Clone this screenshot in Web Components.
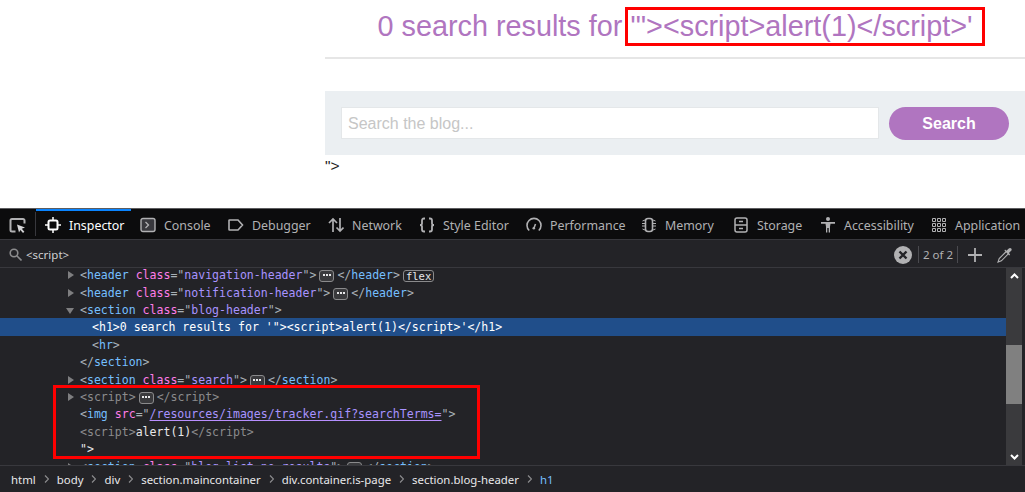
<!DOCTYPE html>
<html>
<head>
<meta charset="utf-8">
<title>search results</title>
<style>
  html, body { margin: 0; padding: 0; height: 492px; overflow: hidden; background: #fff; }
  body { font-family: "Liberation Sans", Arial, sans-serif; }
</style>
</head>
<body>
<blog-page></blog-page>
<dev-tools>
  <dt-tab slot="tabs" icon="inspector" w="95" selected>Inspector</dt-tab>
  <dt-tab slot="tabs" icon="console" w="88">Console</dt-tab>
  <dt-tab slot="tabs" icon="debugger" w="100">Debugger</dt-tab>
  <dt-tab slot="tabs" icon="network" w="91">Network</dt-tab>
  <dt-tab slot="tabs" icon="style" w="107">Style Editor</dt-tab>
  <dt-tab slot="tabs" icon="performance" w="115">Performance</dt-tab>
  <dt-tab slot="tabs" icon="memory" w="92">Memory</dt-tab>
  <dt-tab slot="tabs" icon="storage" w="87">Storage</dt-tab>
  <dt-tab slot="tabs" icon="accessibility" w="111">Accessibility</dt-tab>
  <dt-tab slot="tabs" icon="application" w="103">Application</dt-tab>

  <markup-line slot="markup" depth="0" arrow="closed"><b>&lt;</b><i>header</i> <u>class</u><b>="</b><s>navigation-header</s><b>"&gt;</b><more-badge></more-badge><b>&lt;/</b><i>header</i><b>&gt;</b><more-badge label="flex"></more-badge></markup-line>
  <markup-line slot="markup" depth="0" arrow="closed"><b>&lt;</b><i>header</i> <u>class</u><b>="</b><s>notification-header</s><b>"&gt;</b><more-badge></more-badge><b>&lt;/</b><i>header</i><b>&gt;</b></markup-line>
  <markup-line slot="markup" depth="0" arrow="open"><b>&lt;</b><i>section</i> <u>class</u><b>="</b><s>blog-header</s><b>"&gt;</b></markup-line>
  <markup-line slot="markup" depth="1" selected>&lt;h1&gt;0 search results for '"&gt;&lt;script&gt;alert(1)&lt;/script&gt;'&lt;/h1&gt;</markup-line>
  <markup-line slot="markup" depth="1"><b>&lt;</b><i>hr</i><b>&gt;</b></markup-line>
  <markup-line slot="markup" depth="0"><b>&lt;/</b><i>section</i><b>&gt;</b></markup-line>
  <markup-line slot="markup" depth="0" arrow="closed"><b>&lt;</b><i>section</i> <u>class</u><b>="</b><s>search</s><b>"&gt;</b><more-badge></more-badge><b>&lt;/</b><i>section</i><b>&gt;</b></markup-line>
  <markup-line slot="markup" depth="0" arrow="closed" dim><b>&lt;script&gt;</b><more-badge></more-badge><b>&lt;/script&gt;</b></markup-line>
  <markup-line slot="markup" depth="0"><b>&lt;</b><i>img</i> <u>src</u><b>="</b><a>/resources/images/tracker.gif?searchTerms=</a><b>"&gt;</b></markup-line>
  <markup-line slot="markup" depth="0" dim><b>&lt;script&gt;</b><em>alert(1)</em><b>&lt;/script&gt;</b></markup-line>
  <markup-line slot="markup" depth="0"><em>"&gt;</em></markup-line>
  <markup-line slot="markup" depth="0" arrow="closed"><b>&lt;</b><i>section</i> <u>class</u><b>="</b><s>blog-list no-results</s><b>"&gt;</b><more-badge></more-badge><b>&lt;/</b><i>section</i><b>&gt;</b></markup-line>

  <bread-crumb slot="crumbs">html</bread-crumb>
  <bread-crumb slot="crumbs">body</bread-crumb>
  <bread-crumb slot="crumbs">div</bread-crumb>
  <bread-crumb slot="crumbs">section.maincontainer</bread-crumb>
  <bread-crumb slot="crumbs">div.container.is-page</bread-crumb>
  <bread-crumb slot="crumbs">section.blog-header</bread-crumb>
  <bread-crumb slot="crumbs" last>h1</bread-crumb>
</dev-tools>

<script>
const pageTemplate = document.createElement("template");
pageTemplate.innerHTML = `
  <style>
    :host {
      display: grid;
      grid-template-columns: 325px 1fr;
      height: 208px;
      position: relative;
      background: #fff;
      font-family: "Liberation Sans", Arial, sans-serif;
    }
    h1 {
      margin: 0;
      height: 57px;
      font-size: 28.8px;
      font-weight: 400;
      line-height: 52px;
      text-align: center;
      color: #b075c0;
      white-space: nowrap;
    }
    hr {
      margin: 0 0 32px;
      border: 0;
      height: 2px;
      background: #e6e6e6;
    }
    .search {
      display: flex;
      align-items: center;
      gap: 10px;
      height: 64px;
      padding: 0 16px;
      box-sizing: border-box;
      background: #ebeff2;
    }
    .field {
      width: 538px;
      height: 32px;
      box-sizing: border-box;
      padding: 0 6px;
      border: 1px solid #e4e7e9;
      background: #fff;
      font-size: 16px;
      line-height: 31px;
      color: #c6c6c6;
    }
    .btn {
      width: 120px;
      height: 33px;
      border-radius: 17px;
      background: #b075c0;
      color: #fff;
      font-size: 16px;
      font-weight: 700;
      line-height: 33px;
      text-align: center;
    }
    .rest {
      font-size: 15.5px;
      line-height: 22px;
      color: #222;
    }
    .mark {
      position: absolute;
      left: 625px;
      top: 7px;
      width: 360px;
      height: 39px;
      box-sizing: border-box;
      border: 3px solid #f00;
    }
  </style>
  <div></div>
  <div>
    <h1>0 search results for '"&gt;&lt;script&gt;alert(1)&lt;/script&gt;'</h1>
    <hr>
    <div class="search">
      <div class="field">Search the blog...</div>
      <div class="btn">Search</div>
    </div>
    <div class="rest">"&gt;</div>
  </div>
  <div class="mark"></div>
`;

class BlogPage extends HTMLElement {
  constructor() {
    super();
    this.attachShadow({ mode: "open" });
    this.shadowRoot.appendChild(pageTemplate.content.cloneNode(true));
  }
}

const icons = {
  inspector: `<rect x="3.5" y="3.5" width="9" height="9" rx="1.5" stroke-width="2"/><path d="M8 0v3M8 13v3M0 8h3M13 8h3" stroke-width="1.5"/>`,
  console: `<rect x="1" y="1.5" width="14" height="13" rx="2" fill="#38383d" stroke-width="1.4"/><path d="M5.5 5l3 3-3 3" />`,
  debugger: `<path d="M1.5 3h8.5l4.5 5-4.5 5H1.5a.5.5 0 0 1-.5-.5v-9a.5.5 0 0 1 .5-.5z" stroke-width="1.6"/>`,
  network: `<path d="M5 15V2M1 6l4-4 4 4" stroke-width="1.7"/><path d="M12 1v13M8.5 10.5L12 14l3.5-3.5" stroke-width="1.7"/>`,
  style: `<path d="M6 1.5H5C3.5 1.5 3 2.3 3 3.5v3C3 7.5 2.3 8 1 8c1.3 0 2 .5 2 1.5v3c0 1.2.5 2 2 2h1M10 1.5h1c1.5 0 2 .8 2 2v3c0 1 .7 1.5 2 1.5-1.3 0-2 .5-2 1.5v3c0 1.2-.5 2-2 2h-1" stroke-width="1.8"/>`,
  performance: `<path d="M3.2 13.5A7 7 0 1 1 12.8 13.5" stroke-width="1.6"/><path d="M8 11l1.5-4" stroke-width="1.6"/><circle cx="7.8" cy="11.3" r="1.3" fill="currentColor" stroke="none"/>`,
  memory: `<rect x="4.5" y="1.5" width="7" height="13" rx="2.5" stroke-width="1.6"/><path d="M1.5 4l2.5-1M1 6.5h3M1 9h3M1.5 12l2.5 1M14.5 4l-2.5-1M12 6.5h3M12 9h3M14.5 12L12 13" stroke-width="1"/>`,
  storage: `<rect x="2" y="1" width="12" height="14" rx="2" stroke-width="1.5"/><path d="M2 8h12M6 4.5h4M6 11.5h4" stroke-width="1.5"/>`,
  accessibility: `<circle cx="8" cy="2" r="2" fill="currentColor" stroke="none"/><path d="M1 5h14v1.8h-4.5l-.5 3V15.5H8.7V11H7.3v4.5H6V9.8l-.5-3H1z" fill="currentColor" stroke="none"/>`,
  application: `<path d="M1.5 1.5h3v3h-3zM6.5 1.5h3v3h-3zM11.5 1.5h3v3h-3zM1.5 6.5h3v3h-3zM6.5 6.5h3v3h-3zM11.5 6.5h3v3h-3zM1.5 11.5h3v3h-3zM6.5 11.5h3v3h-3zM11.5 11.5h3v3h-3z" stroke-width="1"/>`
};

class DtTab extends HTMLElement {
  constructor() {
    super();
    const root = this.attachShadow({ mode: "open" });
    const icon = this.getAttribute("icon");
    const selected = this.hasAttribute("selected");
    root.innerHTML = `
      <style>
        :host {
          display: flex;
          align-items: center;
          gap: 8px;
          box-sizing: border-box;
          width: ${this.getAttribute("w")}px;
          height: 30px;
          padding: 2px 0 0 9px;
          font-size: 12.4px;
          white-space: nowrap;
          color: ${selected ? "#fff" : "#b1b1b3"};
          box-shadow: ${selected ? "inset 0 2px 0 #0a84ff" : "none"};
        }
        svg { flex: none; width: 16px; height: 16px; fill: none; stroke: currentColor; stroke-width: 1.3; }
      </style>
      <svg viewBox="0 0 16 16">${icons[icon]}</svg>
      <slot></slot>
    `;
  }
}

class MoreBadge extends HTMLElement {
  constructor() {
    super();
    const root = this.attachShadow({ mode: "open" });
    const label = this.getAttribute("label");
    root.innerHTML = `<style>
        :host {
          display: inline-block;
          vertical-align: -1px;
          box-sizing: border-box;
          height: 12px;
          margin: 0 3px;
          padding: 0 ${label ? 2 : 0}px;
          width: ${label ? "auto" : "15px"};
          border: 1px solid #8a8a8c;
          border-radius: 3px;
          background: ${label ? "transparent" : "#3a3a3d"};
          color: #e8e8ea;
          font: 10.5px/10px "DejaVu Sans Mono", monospace;
          text-align: center;
        }
        span { display: inline-block; vertical-align: 4px; width: 2px; height: 2px; margin: 0 .5px; background: #e8e8ea; }
      </style>${label ? label : "<span></span><span></span><span></span>"}`;
  }
}

const lineTemplate = document.createElement("template");
lineTemplate.innerHTML = `
  <style>
    :host {
      display: block;
      position: relative;
      height: 17.4px;
      line-height: 19px;
      font-family: "DejaVu Sans Mono", "Liberation Mono", monospace;
      font-size: 11.55px;
      color: #e8e8ea;
    }
    :host([selected]) { background: #204e8a; color: #fff; }
    .text { white-space: pre; }
    .arrow {
      position: absolute;
      top: 5px;
      width: 0;
      height: 0;
    }
    .arrow.closed { border-left: 6px solid #7e7e80; border-top: 4px solid transparent; border-bottom: 4px solid transparent; }
    .arrow.open { top: 7px; border-top: 6px solid #7e7e80; border-left: 4px solid transparent; border-right: 4px solid transparent; }
    ::slotted(b) { font-weight: 400; color: #a9b1b8; }
    ::slotted(i) { font-style: normal; color: #75bfff; }
    ::slotted(u) { text-decoration: none; color: #ff7de9; }
    ::slotted(s) { text-decoration: none; color: #a893ff; }
    ::slotted(a) { color: #a893ff; text-decoration: underline; text-decoration-color: #b98eff; text-underline-offset: 2px; }
    ::slotted(em) { font-style: normal; color: #e8e8ea; }
    :host([dim]) ::slotted(b) { color: #8b8b8d; }
  </style>
  <span class="arrow"></span>
  <span class="text"><slot></slot></span>
`;

class MarkupLine extends HTMLElement {
  constructor() {
    super();
    this.attachShadow({ mode: "open" });
    this.shadowRoot.appendChild(lineTemplate.content.cloneNode(true));
    const depth = Number(this.getAttribute("depth") ?? 0);
    this.style.paddingLeft = `${80 + depth * 12}px`;
    const arrow = this.getAttribute("arrow");
    const $arrow = this.shadowRoot.querySelector(".arrow");
    if (arrow) {
      $arrow.classList.add(arrow);
      $arrow.style.left = `${arrow === "open" ? 66 : 68}px`;
    }
  }
}

class BreadCrumb extends HTMLElement {
  constructor() {
    super();
    const root = this.attachShadow({ mode: "open" });
    const last = this.hasAttribute("last");
    root.innerHTML = `
      <style>
        :host { display: flex; align-items: center; gap: 8px; color: ${last ? "#75bfff" : "#e8e8ea"}; white-space: nowrap; }
        svg { width: 5px; height: 8px; fill: none; stroke: #8b8b8d; stroke-width: 1.2; }
      </style>
      <slot></slot>
      ${last ? "" : `<svg viewBox="0 0 5 8"><path d="M1 .5L4.5 4 1 7.5"/></svg>`}
    `;
  }
}

const toolsTemplate = document.createElement("template");
toolsTemplate.innerHTML = `
  <style>
    :host {
      display: block;
      height: 284px;
      background: #232327;
      font-family: "Noto Sans", "Open Sans", sans-serif;
      color: #b1b1b3;
    }
    .tabs {
      display: flex;
      height: 32px;
      box-sizing: border-box;
      border-top: 1px solid #5c5c5f;
      border-bottom: 1px solid #38383d;
      background: #0c0c0d;
      overflow: hidden;
    }
    .pick { width: 36px; flex: none; display: flex; align-items: center; padding: 2px 0 0 9px; box-sizing: border-box; border-right: 1px solid #38383d; margin: 3px 0; }
    .pick svg { width: 17px; height: 17px; fill: none; stroke: #b1b1b3; stroke-width: 2; }
    .find {
      display: flex;
      align-items: center;
      height: 28px;
      box-sizing: border-box;
      padding: 2px 0 0 9px;
      border-bottom: 1px solid #38383d;
      font-size: 11.5px;
    }
    .find .lens { width: 13px; height: 13px; fill: none; stroke: #8b8b8d; stroke-width: 1.6; margin-right: 4px; }
    .find .query { flex: 1; color: #d0d0d2; }
    .find .clear { width: 18px; height: 18px; margin-right: 6px; }
    .find .count { width: 38px; text-align: center; border-left: 1px solid #4a4a4f; border-right: 1px solid #4a4a4f; line-height: 17px; color: #b1b1b3; }
    .find .tool { width: 16px; height: 16px; fill: none; stroke: #b1b1b3; stroke-width: 1.1; }
    .find .plus { margin-left: 9px; }
    .find .drop { margin: 0 12px 0 14px; }
    .body { display: flex; height: 198px; border-bottom: 1px solid #38383d; box-sizing: border-box; }
    .markup { flex: 1; overflow: hidden; position: relative; }
    .rows { margin-top: -1.8px; }
    .bar {
      flex: none;
      width: 16px;
      margin-right: 3px;
      background: #3a3a3d;
      display: flex;
      flex-direction: column;
      align-items: center;
    }
    .bar svg { flex: none; width: 9px; height: 6px; fill: none; stroke: #fff; stroke-width: 2; margin: 5px 0; }
    .thumb { width: 100%; height: 59px; margin: 61px 0 auto; background: #808080; }
    .crumbs {
      display: flex;
      align-items: center;
      gap: 8px;
      height: 26px;
      padding-left: 11px;
      font-size: 11.4px;
    }
    .mark {
      position: absolute;
      left: 53px;
      top: 117px;
      width: 427px;
      height: 74px;
      box-sizing: border-box;
      border: 3px solid #f00;
      pointer-events: none;
    }
  </style>
  <div class="tabs">
    <div class="pick">
      <svg viewBox="0 0 17 17"><path d="M6.5 14.5H3a1.5 1.5 0 0 1-1.5-1.5V3.5A1.5 1.5 0 0 1 3 2h11a1.5 1.5 0 0 1 1.5 1.5V6.5"/><path d="M8 7.5l8 3-3.2 1.3 2.6 3-1.4 1.2-2.6-3L10 15.5z" fill="#d4d4d6" stroke="none"/></svg>
    </div>
    <slot name="tabs"></slot>
  </div>
  <div class="find">
    <svg class="lens" viewBox="0 0 13 13"><circle cx="5" cy="5" r="3.8"/><path d="M8 8l4.5 4.5"/></svg>
    <span class="query">&lt;script&gt;</span>
    <svg class="clear" viewBox="0 0 18 18"><circle cx="9" cy="9" r="9" fill="#b1b1b3"/><path d="M5.5 5.5l7 7M12.5 5.5l-7 7" stroke="#232327" stroke-width="2.4"/></svg>
    <span class="count">2 of 2</span>
    <svg class="tool plus" viewBox="0 0 16 16"><path d="M8 1v14M1 8h14" stroke-width="1.8"/></svg>
    <svg class="tool drop" viewBox="0 0 16 16"><path d="M8.8 5L2.2 11.6 1 15l3.4-1.2 6.6-6.6"/><path d="M7.5 3.8l4.700 4.700 .9-.9-1.200-1.500 2-2c1-1 1-2 .3-2.700s-1.700-.7-2.700.3l-2 2-1.500-1.200z" fill="#b1b1b3" stroke="none"/></svg>
  </div>
  <div class="body">
    <div class="markup">
      <div class="rows"><slot name="markup"></slot></div>
      <div class="mark"></div>
    </div>
    <div class="bar">
      <svg viewBox="0 0 9 6"><path d="M1 5l3.500-3.500L8 5"/></svg>
      <div class="thumb"></div>
      <svg viewBox="0 0 9 6"><path d="M1 1l3.500 3.500L8 1"/></svg>
    </div>
  </div>
  <div class="crumbs"><slot name="crumbs"></slot></div>
`;

class DevTools extends HTMLElement {
  constructor() {
    super();
    this.attachShadow({ mode: "open" });
    this.shadowRoot.appendChild(toolsTemplate.content.cloneNode(true));
  }
}

customElements.define("blog-page", BlogPage);
customElements.define("dt-tab", DtTab);
customElements.define("more-badge", MoreBadge);
customElements.define("markup-line", MarkupLine);
customElements.define("bread-crumb", BreadCrumb);
customElements.define("dev-tools", DevTools);
</script>
</body>
</html>
